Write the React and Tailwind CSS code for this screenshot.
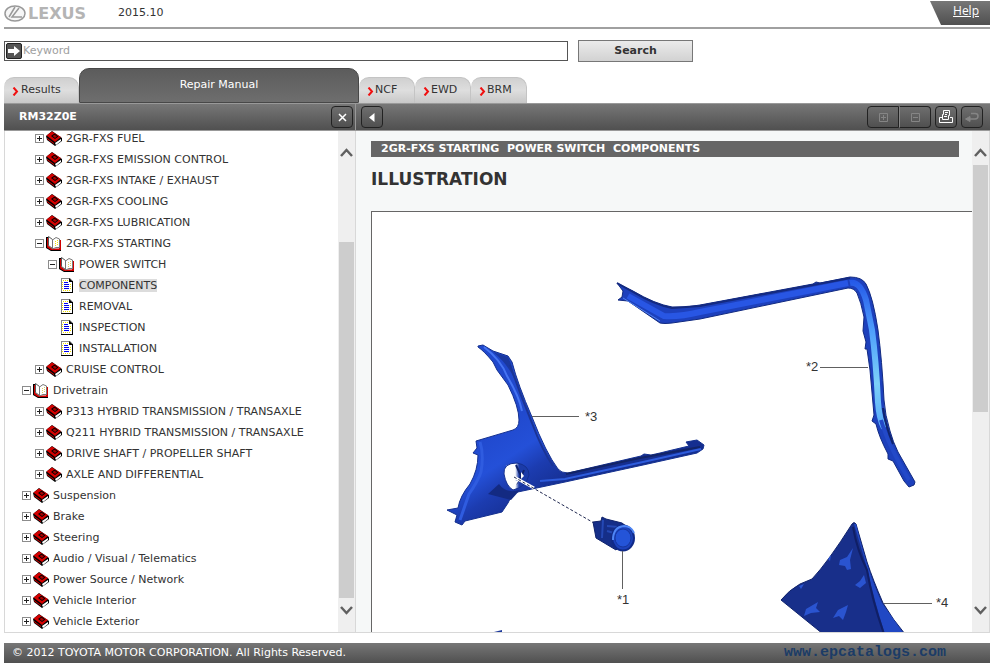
import React from 'react';

const tree = [
  { level: 1, kind: 'closed', label: '2GR-FXS FUEL' },
  { level: 1, kind: 'closed', label: '2GR-FXS EMISSION CONTROL' },
  { level: 1, kind: 'closed', label: '2GR-FXS INTAKE / EXHAUST' },
  { level: 1, kind: 'closed', label: '2GR-FXS COOLING' },
  { level: 1, kind: 'closed', label: '2GR-FXS LUBRICATION' },
  { level: 1, kind: 'open', label: '2GR-FXS STARTING' },
  { level: 2, kind: 'open', label: 'POWER SWITCH' },
  { level: 3, kind: 'page', label: 'COMPONENTS', selected: true },
  { level: 3, kind: 'page', label: 'REMOVAL' },
  { level: 3, kind: 'page', label: 'INSPECTION' },
  { level: 3, kind: 'page', label: 'INSTALLATION' },
  { level: 1, kind: 'closed', label: 'CRUISE CONTROL' },
  { level: 0, kind: 'open', label: 'Drivetrain' },
  { level: 1, kind: 'closed', label: 'P313 HYBRID TRANSMISSION / TRANSAXLE' },
  { level: 1, kind: 'closed', label: 'Q211 HYBRID TRANSMISSION / TRANSAXLE' },
  { level: 1, kind: 'closed', label: 'DRIVE SHAFT / PROPELLER SHAFT' },
  { level: 1, kind: 'closed', label: 'AXLE AND DIFFERENTIAL' },
  { level: 0, kind: 'closed', label: 'Suspension' },
  { level: 0, kind: 'closed', label: 'Brake' },
  { level: 0, kind: 'closed', label: 'Steering' },
  { level: 0, kind: 'closed', label: 'Audio / Visual / Telematics' },
  { level: 0, kind: 'closed', label: 'Power Source / Network' },
  { level: 0, kind: 'closed', label: 'Vehicle Interior' },
  { level: 0, kind: 'closed', label: 'Vehicle Exterior' },
];

const indents = ['pl-[17px]', 'pl-[30px]', 'pl-[43px]', 'pl-[54px]'];

const bar = 'bg-linear-to-b from-[#777] to-[#505050]';
const toolButton =
  'flex h-[22px] items-center justify-center border border-[#222] bg-linear-to-b from-[#6e6e6e] to-[#505050]';

const ClosedBook = () => (
  <svg width="16" height="15" viewBox="0 0 16 15">
    <path d="M0 5 L6 0 L16 7 V10 L9 15 L1 9 Z" fill="#000" />
    <path d="M0.500 4.500 L6 0.500 L15 6 L9 11 Z" fill="#d40000" />
    <path d="M5 5 L8.500 2.500 L12.500 5.500 L9 8 Z" fill="#000" />
    <path d="M6.500 5 L8.500 3.800 L11 5.500 L9 7 Z" fill="#a00" />
    <path d="M9 12 L15 8 V10 L10 14 Z" fill="#fff" />
    <path d="M1 7 L8 12 V13 L1 8 Z" fill="#e00000" />
  </svg>
);

const OpenBook = ({ yellow }) => (
  <svg width="16" height="15" viewBox="0 0 16 15">
    <path d="M0 1 H2 V11 L6 14 H15 V15 H5 L0 12 Z" fill="#000" />
    <path d="M1 2 H2.500 V10 L6 12.500 H13 V4 H15 V14 H5 L1 11.500 Z" fill="#d00000" />
    <path d="M2.500 0.500 L6.500 3.500 V12.500 L2.500 9.500 Z" fill="#fff" stroke="#555" />
    <path d="M6.500 4 L10 1.500 L13.500 3 V11.500 H10 L6.500 13 Z" fill="#fff" stroke="#777" />
    <path d="M9.500 5 V11 M11.500 4 V10" stroke={yellow ? '#f5e600' : '#ddd060'} strokeDasharray="1 1" />
  </svg>
);

const Page = () => (
  <svg width="16" height="15" viewBox="0 0 16 15">
    <path d="M2 0 H11 L14 3 V15 H2 Z" fill="#888" />
    <path d="M13 3 H14 V15 H2 V14 H13 Z M10 0 L14 4 H10 Z" fill="#000" />
    <path d="M3 1 H10 V4 H13 V14 H3 Z" fill="#fff" />
    <path d="M4 2 H5 V3 H4 Z M6 2 H7 V3 H6 Z M8 2 H9 V3 H8 Z M4 12 H5 V13 H4 Z M6 12 H7 V13 H6 Z M8 12 H9 V13 H8 Z M10 12 H11 V13 H10 Z M3 4 H4 V5 H3 Z M3 6 H4 V7 H3 Z M3 8 H4 V9 H3 Z M3 10 H4 V11 H3 Z M11 6 H12 V7 H11 Z M11 8 H12 V9 H11 Z M11 10 H12 V11 H11 Z" fill="#f0e000" />
    <path d="M5 4 H9 V5 H5 Z M5 6 H10 V7 H5 Z M5 8 H10 V9 H5 Z M5 10 H10 V11 H5 Z" fill="#0000f0" />
  </svg>
);

const Expander = ({ open }) => (
  <button type="button" aria-label={open ? 'Collapse' : 'Expand'} className="mr-0.5 size-[9px]">
    <svg width="9" height="9" viewBox="0 0 9 9" className="block">
      <path d="M0 0 H9 V9 H0 Z" fill="#8c8c8c" />
      <path d="M1 1 H8 V8 H1 Z" fill="#fff" />
      <path d="M2 4 H7 V5 H2 Z" fill="#222" />
      {!open && <path d="M4 2 H5 V7 H4 Z" fill="#222" />}
    </svg>
  </button>
);

const TreeRow = ({ row }) => (
  <li className={`flex h-[21px] items-center ${indents[row.level]}`}>
    {row.kind !== 'page' && <Expander open={row.kind === 'open'} />}
    {row.kind === 'closed' && <ClosedBook />}
    {row.kind === 'open' && <OpenBook yellow={row.level === 1} />}
    {row.kind === 'page' && <Page />}
    <a href="#page" className={`ml-1 leading-[13px] whitespace-nowrap ${row.selected ? 'bg-[#dcdcdc]' : ''}`}>
      {row.label}
    </a>
  </li>
);

const Chevron = ({ d }) => (
  <svg width="13" height="9" viewBox="0 0 13 9">
    <path d={d} fill="none" stroke="#606060" strokeWidth="2.500" />
  </svg>
);

const ScrollBar = ({ before, thumb }) => (
  <div className="flex w-[17px] shrink-0 flex-col bg-[#efefef] px-px">
    <button type="button" aria-label="Scroll up" className="flex h-[34px] items-end justify-center pt-2 pb-2">
      <Chevron d="M1 8 L6.500 2 L12 8" />
    </button>
    <div className="flex flex-1 flex-col">
      <div style={{ height: `${before}%` }} />
      <div className="bg-[#cdcdcd]" style={{ height: `${thumb}%` }} />
    </div>
    <button type="button" aria-label="Scroll down" className="flex h-[34px] items-start justify-center pt-2">
      <Chevron d="M1 1 L6.500 7 L12 1" />
    </button>
  </div>
);

const Tab = ({ label, className }) => (
  <button
    type="button"
    className={`flex h-[26px] items-center rounded-t-[10px] border-t border-r border-[#c4c4c4] bg-linear-to-b from-[#d0d0d0] via-[#dedede] to-[#c8c8c8] pl-2 ${className}`}
  >
    <svg width="7" height="9" viewBox="0 0 7 9" className="mt-0.5">
      <path d="M1.500 0.500 L5 4.500 L1.500 8.500" fill="none" stroke="#f01010" strokeWidth="2" />
    </svg>
    {label}
  </button>
);

const Illustration = () => (
  <svg width="600" height="420" viewBox="372 212 600 420" className="block shrink-0" role="img" aria-label="Power switch components">
    <defs>
      <linearGradient id="panel" x1="470" y1="440" x2="520" y2="515" gradientUnits="userSpaceOnUse">
        <stop offset="0" stopColor="#2048cc" />
        <stop offset="0.400" stopColor="#2450d8" />
        <stop offset="0.650" stopColor="#1c3cb0" />
        <stop offset="1" stopColor="#152e90" />
      </linearGradient>
      <linearGradient id="pillar" x1="0" y1="280" x2="0" y2="487" gradientUnits="userSpaceOnUse">
        <stop offset="0" stopColor="#2458e8" />
        <stop offset="0.250" stopColor="#50a0fc" />
        <stop offset="0.500" stopColor="#7cd0f8" />
        <stop offset="0.720" stopColor="#58a8f8" />
        <stop offset="0.850" stopColor="#2450d0" />
      </linearGradient>
      <linearGradient id="hole" x1="0" y1="0" x2="1" y2="0">
        <stop offset="0.450" stopColor="#fff" />
        <stop offset="0.600" stopColor="#1b3ba8" />
      </linearGradient>
    </defs>

    {/* roof side garnish, *2 */}
    <path d="M617 283 L633 291 Q655 304 672 307 Q686 308 700 305 L813 284 L816 282 L820 283 L850 277 Q862 277 866 284 Q873 297 878 330 Q882 360 884 400 Q885 415 890 431 Q893 442 898 452 L915 482 L914 485 L909 487 L904 481 L893 461 L888 459 L888 454 Q879 437 876 424 L872 421 L874 415 L870 370 L867 349 L865 349 L866 342 L863 331 L864 317 Q861 302 857 293 Q854 288 848 288 L700 319 L672 323 Q664 324 660 323 L628 301 L618 300 L622 297 L623 291 Z" fill="#1d40bc" stroke="#122a80" />
    <path d="M628 296 L664 316 Q680 317 700 312 L848 283" fill="none" stroke="#2856e4" strokeWidth="6" />
    <path d="M617 283 L633 292 Q655 305 672 308 L700 306 L813 285 L850 278" fill="none" stroke="#142a80" strokeWidth="2" />
    <path d="M623 298 L660 321" stroke="#4f80f0" />
    <path d="M850 283 Q860 281 866 300 L872 330 Q876 360 878 402 Q879 418 884 428" fill="none" stroke="url(#pillar)" strokeWidth="6" />
    <path d="M881 420 Q888 445 909 480" fill="none" stroke="#2349c8" strokeWidth="4" />
    <path d="M883 408 Q885 425 893 444" fill="none" stroke="#10246e" strokeWidth="2" />

    {/* instrument panel garnish, *3 */}
    <path d="M478 346 L483 345 L493 351 L508 356 L512 362 Q518 385 532 417 Q546 453 558 469 Q561 473 568 473 L641 456 L644 454 L651 455 L660 453 L668 451 L689 446 L686 442 L697 440 L704 445 L703 449 L697 453 L643 465 L565 482 L513 493 L508 503 L502 512 L465 521 L462 525 L455 522 L457 515 L447 510 L458 508 Q460 496 470 484 Q478 470 478 455 L473 453 L477 448 L476 441 L513 430 Q519 428 519 420 Q519 407 508 385 L497 370 L493 362 Q484 351 478 347 Z" fill="url(#panel)" stroke="#14308f" />
    <path d="M480 442 Q484 454 481 472 Q478 481 469 494 L460 520" fill="none" stroke="#2f5ce0" strokeWidth="3" />
    <path d="M484 347 Q501 360 507 376 Q519 396 522 411" fill="none" stroke="#4574f2" strokeWidth="2" />
    <path d="M493 352 L508 357 L511 364 L514 378 Q506 362 493 352 Z" fill="#1a389f" />
    <path d="M510 365 Q520 394 532 423 Q542 450 553 466" fill="none" stroke="#1a3496" strokeWidth="2" />
    <path d="M566 474 L640 458 L700 447" fill="none" stroke="#122467" strokeWidth="2" />
    <path d="M540 481 L565 479 L643 462 L701 449" fill="none" stroke="#2e5cdc" strokeWidth="2" />
    <path d="M520 490 Q506 494 499 484 L488 494 L511 500 Z" fill="#132a82" />
    <path d="M504 474 Q503 463 517 463 Q529 465 529 475 Q526 487 513 490 Q506 486 504 474 Z" fill="url(#hole)" stroke="#14308f" />
    <path d="M516 465 L521 476 L516 484 M524 470 L520 480" fill="none" stroke="#0f236d" strokeWidth="2" />
    <path d="M521 472 L524 476 L521 479 Z M510 483 L519 480 L514 488 Z" fill="#fff" />
    <path d="M514 477 L534 488" stroke="#fff" strokeWidth="3" />
    <path d="M514 477 L594 523" stroke="#202850" strokeDasharray="3 2" />

    {/* power switch, *1 */}
    <path d="M593 522 L601 521 L602 517 L606 519 L622 523 L634 532 L616 550 L596 538 Z" fill="#152e88" stroke="#0f226b" />
    <path d="M603 520 L602 538 M607 526 L618 527 M607 531 L614 533" fill="none" stroke="#2448b4" strokeWidth="2" />
    <ellipse cx="623" cy="538" rx="11" ry="12.500" fill="#1c42bd" stroke="#102a88" strokeWidth="2" />
    <path d="M613 540 Q613 527 624 526 Q631 526 634 533" fill="none" stroke="#4f86f5" strokeWidth="2" />
    <ellipse cx="623" cy="538" rx="8" ry="9" fill="#2454d8" stroke="#17379f" />

    {/* trim cover, *4 */}
    <path d="M852 524 Q854 521 856 524 L867 562 Q873 580 883 603 Q893 620 905 634 H823 L781 600 Q789 590 800 584 L812 579 Q828 562 852 524 Z" fill="#182f8a" stroke="#11246c" />
    <path d="M854 524 Q864 557 868 572 Q874 600 885 634 L904 634 Q889 613 882 603 Q868 573 856 524 Z" fill="#2148c4" />
    <path d="M853 527 Q857 550 867 570 Q872 600 884 634" fill="none" stroke="#101f66" strokeWidth="2" />
    <path d="M853 548 L850 560 L851 569 L847 570 L845 566 L839 565 L840 560 L847 557 Z M864 575 L866 583 L860 588 L855 585 L860 581 Z M818 602 L816 608 L820 612 L811 613 L804 616 L806 609 Z M848 605 L846 612 L843 620 L839 616 L833 618 L838 610 Z M799 586 L804 584 L801 589 Z M828 559 L831 555 L830 561 Z" fill="#2a54d0" />

    <path d="M494 632 L502 630 V632 Z" fill="#1d3a9c" />

    <g stroke="#606060" strokeWidth="1">
      <path d="M820 367.500 H868" />
      <path d="M532 416.500 H579" />
      <path d="M622.500 551 V589" />
      <path d="M884 603.500 H932" />
    </g>
    <g fontFamily="Liberation Sans, sans-serif" fontSize="13" fill="#333">
      <text x="806" y="371">*2</text>
      <text x="585" y="421">*3</text>
      <text x="617" y="604">*1</text>
      <text x="936" y="607">*4</text>
    </g>
  </svg>
);

const App = () => (
  <div className="flex h-screen flex-col overflow-hidden bg-white pr-1.5 pb-[7px] pl-1 font-['DejaVu_Sans',Verdana,sans-serif] text-[11px] text-[#333]">
    <header className="flex h-[29px] shrink-0 items-center border-b-2 border-[#a0a0a0]">
      <svg width="22" height="17" viewBox="0 0 22 17" aria-label="Lexus emblem">
        <ellipse cx="11" cy="8.500" rx="10" ry="7.500" fill="#f6f6f6" stroke="#999" strokeWidth="1.500" />
        <path d="M15 3 L8 12 H18 M11 2 L5 12" fill="none" stroke="#999" strokeWidth="1.500" />
      </svg>
      <span className="ml-0.5 text-[16px] leading-5 font-bold text-[#b4b4b4]">LEXUS</span>
      <span className="ml-8">2015.10</span>
      <div className={`mt-px ml-auto flex h-6 w-[60px] items-start justify-end self-start pt-px pr-[11px] ${bar} [clip-path:polygon(0_0,100%_0,100%_100%,11px_100%)]`}>
        <a href="#help" className="font-['Open_Sans',sans-serif] text-[12px] leading-[18px] text-white underline">Help</a>
      </div>
    </header>

    <form className="mt-[11px] flex shrink-0 items-center gap-2.5">
      <div className="flex h-5 w-[564px] items-center border border-[#555] pl-px">
        <span className="flex size-4 shrink-0 items-center justify-center rounded-xs border border-[#222] bg-[#555]">
          <svg width="12" height="10" viewBox="0 0 12 10">
            <path d="M0 3 H6 V0 L12 5 L6 10 V7 H0 Z" fill="#fff" />
          </svg>
        </span>
        <input type="text" aria-label="Keyword" placeholder="Keyword" className="min-w-0 flex-1 pl-px outline-none placeholder:text-[#a0a0a0]" />
      </div>
      <button type="button" className="h-[22px] w-[115px] border border-[#777] bg-linear-to-b from-[#ebebeb] to-[#d2d2d2] font-bold">
        Search
      </button>
    </form>

    <nav className="mt-1.5 flex shrink-0 items-end">
      <Tab label="Results" className="w-[75px] gap-0.5" />
      <button type="button" className="h-[35px] w-[280px] rounded-t-[10px] border border-[#484848] bg-linear-to-b from-[#5c5c5c] to-[#6e6e6e] text-white">
        Repair Manual
      </button>
      <Tab label="NCF" className="w-14 gap-px" />
      <Tab label="EWD" className="w-14 gap-px" />
      <Tab label="BRM" className="w-14 gap-px" />
    </nav>

    <main className="flex min-h-0 flex-1">
      <section className="flex w-[352px] shrink-0 flex-col">
        <div className={`flex h-7 shrink-0 items-center justify-between border-y border-r border-[#999] pr-0.5 pl-[15px] ${bar}`}>
          <h2 className="font-bold text-white">RM32Z0E</h2>
          <button type="button" aria-label="Close" className={`${toolButton} w-[22px] rounded`}>
            <svg width="9" height="9" viewBox="0 0 9 9">
              <path d="M1 1 L8 8 M8 1 L1 8" stroke="#fff" strokeWidth="1.500" />
            </svg>
          </button>
        </div>
        <div className="flex min-h-0 flex-1 border-x border-b border-[#d8d8d8]">
          <ul className="-mt-[3px] min-w-0 flex-1">
            {tree.map((row) => (
              <TreeRow key={row.label} row={row} />
            ))}
          </ul>
          <ScrollBar before={17.8} thumb={82.2} />
        </div>
      </section>

      <section className="flex min-w-0 flex-1 flex-col">
        <div className={`flex h-7 shrink-0 items-center border-y border-[#999] pr-[7px] pl-[5px] ${bar}`}>
          <button type="button" aria-label="Previous" className={`${toolButton} mr-auto w-[22px] rounded`}>
            <svg width="6" height="9" viewBox="0 0 6 9">
              <path d="M5.500 0 V9 L0 4.500 Z" fill="#fff" />
            </svg>
          </button>
          <button type="button" aria-label="Zoom in" className={`${toolButton} w-8 rounded-l`}>
            <svg width="9" height="9" viewBox="0 0 9 9" fill="none" stroke="#858585">
              <path d="M0.500 0.500 H8.500 V8.500 H0.500 Z M2 4.500 H7 M4.500 2 V7" />
            </svg>
          </button>
          <button type="button" aria-label="Zoom out" className={`${toolButton} mr-1 w-8 rounded-r border-l-[#888]`}>
            <svg width="9" height="9" viewBox="0 0 9 9" fill="none" stroke="#858585">
              <path d="M0.500 0.500 H8.500 V8.500 H0.500 Z M2 4.500 H7" />
            </svg>
          </button>
          <button type="button" aria-label="Print" className={`${toolButton} mr-1 w-[22px] rounded`}>
            <svg width="14" height="14" viewBox="0 0 14 14" fill="none" stroke="#fff">
              <path d="M3.500 9.500 V4.500 H4.500 V0.500 H10.500 V5.500 H9.500 V9.500 Z M6 2.500 H9 M6 4.500 H8 M5 6.500 H8" />
              <path d="M3 7.500 H0.500 V12.500 H13.500 V7.500 H11" />
            </svg>
          </button>
          <button type="button" aria-label="Back" className={`${toolButton} w-[22px] rounded`}>
            <svg width="14" height="11" viewBox="0 0 14 11" fill="none" stroke="#858585">
              <path d="M6 1.500 H10 Q13 1.500 13 4 Q13 7 10 7 H2" strokeWidth="1.500" />
              <path d="M5 4.500 V9.500 L0.500 7 Z" fill="#858585" />
            </svg>
          </button>
        </div>

        <div className="flex min-h-0 flex-1 border-r border-b border-[#d8d8d8]">
          <article className="flex min-w-0 flex-1 flex-col overflow-hidden bg-[#f6f8f8] pt-2.5 pl-[15px]">
            <h3 className="mr-[13px] h-4 shrink-0 bg-[#666] pl-2.5 leading-4 font-bold whitespace-pre text-white">
              {'2GR-FXS STARTING  POWER SWITCH  COMPONENTS'}
            </h3>
            <h1 className="mt-2.5 h-11 shrink-0 text-[17px] leading-6 font-bold">ILLUSTRATION</h1>
            <div className="min-h-0 flex-1 overflow-hidden border-t border-l border-[#666] bg-white">
              <Illustration />
            </div>
          </article>
          <ScrollBar before={0} thumb={57} />
        </div>
      </section>
    </main>

    <footer className={`mt-2.5 flex h-5 shrink-0 items-center justify-between pr-11 pl-2 text-white ${bar}`}>
      <span>© 2012 TOYOTA MOTOR CORPORATION. All Rights Reserved.</span>
      <a href="#site" className="font-['Liberation_Mono',monospace] text-[15px] leading-5 font-bold text-[#1c3c66]">
        www.epcatalogs.com
      </a>
    </footer>
  </div>
);

export default App;
